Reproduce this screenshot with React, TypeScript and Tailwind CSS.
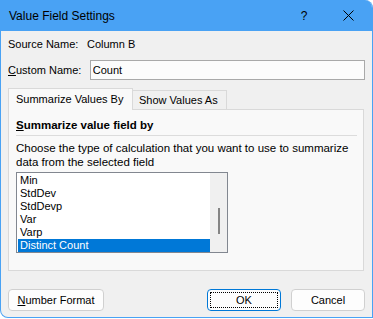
import { useState } from "react";

const items = ["Sum", "Count", "Average", "Max", "Min", "StdDev", "StdDevp", "Var", "Varp", "Distinct Count"];

export default function App() {
    const [selected, setSelected] = useState("Distinct Count");
    const [name, setName] = useState("Count");
    const visible = items.slice(4);

    return (
        <div className="w-[373px] h-[319px] bg-white font-['Liberation_Sans',Arial,sans-serif] text-[11px] text-black">
            <div className="w-[373px] h-[318px] flex flex-col bg-[#f0f0f0] border-x border-b border-[#49a2f4] rounded-tr-[8px] rounded-bl-[8px] overflow-hidden">
                {/* title bar */}
                <div className="h-[31px] shrink-0 bg-[#49a2f4] flex items-center pl-[8px] text-[12px]">
                    <span className="flex-1">Value Field Settings</span>
                    <span className="w-[12px] text-center mr-[33px]">?</span>
                    <svg width="11" height="11" viewBox="0 0 11 11" className="mr-[18px]">
                        <path d="M0.5 0.5 L10.5 10.5 M10.5 0.5 L0.5 10.5" stroke="#000" strokeWidth="1" />
                    </svg>
                </div>

                <div className="flex flex-col px-[7px]">
                    <div className="flex h-[16px] leading-[16px] mt-[5px]">
                        <span className="w-[79px]">Source Name:</span>
                        <span>Column B</span>
                    </div>
                    <div className="flex items-center mt-[8px]">
                        <span className="w-[82px]">
                            <span className="underline">C</span>ustom Name:
                        </span>
                        <input
                            value={name}
                            onChange={(e) => setName(e.target.value)}
                            className="w-[276px] h-[20px] px-[2px] bg-[#fcfcfc] border border-[#a9a9a9] outline-none text-[11px]"
                        />
                    </div>

                    {/* tabs */}
                    <div className="flex items-end mt-[8px] h-[21px]">
                        <div className="relative z-10 h-[22px] w-[125px] -mb-px bg-[#f9f9f9] border border-b-0 border-[#d9d9d9] pl-[7px] leading-[21px]">
                            Summarize Values By
                        </div>
                        <div className="h-[19px] w-[94px] bg-[#f0f0f0] border border-l-0 border-b-0 border-[#d9d9d9] pl-[6px] leading-[19px]">
                            Show Values As
                        </div>
                    </div>
                    <div className="w-[356px] h-[162px] bg-[#f9f9f9] border border-[#d9d9d9] px-[7px] flex flex-col">
                        <div className="font-bold text-[11.5px] h-[16px] leading-[16px] mt-[7px]">
                            <span className="underline">S</span>ummarize value field by
                        </div>
                        <div className="h-px bg-[#dcdcdc] mt-[2px] mr-[-1px]" />
                        <div className="text-[11.5px] leading-[14px] mt-[5px]">
                            Choose the type of calculation that you want to use to summarize
                            <br />
                            data from the selected field
                        </div>
                        <div className="mt-[3px] w-[212px] h-[81px] bg-white border border-[#828790] flex">
                            <div className="flex-1 flex flex-col pl-px pt-px">
                                {visible.map((item) => (
                                    <div
                                        key={item}
                                        onClick={() => setSelected(item)}
                                        className={
                                            selected === item
                                                ? "h-[13px] leading-[13px] pl-[2px] bg-[#0078d7] text-white"
                                                : "h-[13px] leading-[13px] pl-[2px]"
                                        }
                                    >
                                        {item}
                                    </div>
                                ))}
                            </div>
                            <div className="w-[17px] bg-[#f0f0f0] flex justify-center pt-[35px]">
                                <div className="w-[2px] h-[26px] bg-[#858585]" />
                            </div>
                        </div>
                    </div>

                    {/* buttons */}
                    <div className="flex mt-[18px]">
                        <button className="w-[96px] h-[22px] rounded-[4px] bg-[#fdfdfd] border border-[#d0d0d0] text-[11px]">
                            <span className="underline">N</span>umber Format
                        </button>
                        <button className="ml-auto w-[74px] h-[22px] rounded-[4px] bg-[#fdfdfd] border border-[#0078d7] p-[2px] text-[11px]">
                            <span className="block w-full h-full border border-dotted border-black leading-[14px]">OK</span>
                        </button>
                        <button className="ml-[10px] w-[74px] h-[22px] rounded-[4px] bg-[#fdfdfd] border border-[#d0d0d0] text-[11px]">
                            Cancel
                        </button>
                    </div>
                </div>
            </div>
        </div>
    );
}
